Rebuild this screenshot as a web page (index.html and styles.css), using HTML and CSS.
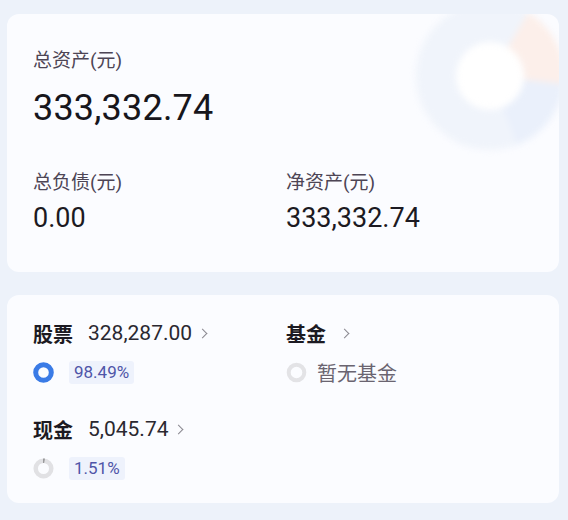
FILE: index.html
```html
<!DOCTYPE html>
<html lang="zh">
<head>
<meta charset="utf-8">
<link rel="stylesheet" href="styles.css">
</head>
<body>
<div class="page">
  <section class="card summary">
    <svg class="decor" width="200" height="200" viewBox="0 0 200 200">
      <circle cx="100" cy="100" r="54" fill="none" stroke="#f0f4fb" stroke-width="40"/>
      <path d="M128 54 A54 54 0 0 1 154 106" fill="none" stroke="#fcefea" stroke-width="40"/>
      <path d="M154 106 A54 54 0 0 1 120 150" fill="none" stroke="#eaf0fb" stroke-width="40"/>
      <circle cx="100" cy="100" r="33" fill="#ffffff"/>
    </svg>
    <div class="block">
      <div class="label">总资产(元)</div>
      <div class="big">333,332.74</div>
    </div>
    <div class="pair">
      <div class="block">
        <div class="label">总负债(元)</div>
        <div class="mid">0.00</div>
      </div>
      <div class="block">
        <div class="label">净资产(元)</div>
        <div class="mid">333,332.74</div>
      </div>
    </div>
  </section>
  <section class="card holdings">
    <div class="item">
      <div class="head"><span class="name">股票</span><span class="amount">328,287.00</span><span class="chev"></span></div>
      <div class="meta">
        <svg class="ring" width="21" height="21" viewBox="0 0 21 21"><circle cx="10.5" cy="10.5" r="7.8" fill="none" stroke="#3a7be6" stroke-width="5"/></svg>
        <span class="pill">98.49%</span>
      </div>
    </div>
    <div class="item">
      <div class="head"><span class="name">基金</span><span class="chev gap"></span></div>
      <div class="meta">
        <svg class="ring" width="21" height="21" viewBox="0 0 21 21"><circle cx="10.5" cy="10.5" r="7.8" fill="none" stroke="#e3e3e6" stroke-width="4"/></svg>
        <span class="empty">暂无基金</span>
      </div>
    </div>
    <div class="item">
      <div class="head"><span class="name">现金</span><span class="amount">5,045.74</span><span class="chev"></span></div>
      <div class="meta">
        <svg class="ring" width="21" height="21" viewBox="0 0 21 21"><circle cx="10.5" cy="10.5" r="7.8" fill="none" stroke="#e1e1e4" stroke-width="4.5"/><path d="M10.5 2.7 A7.8 7.8 0 0 1 11.3 2.74" fill="none" stroke="#555" stroke-width="4.5"/></svg>
        <span class="pill">1.51%</span>
      </div>
    </div>
  </section>
</div>
</body>
</html>
```
FILE: styles.css
```css
html, body {
  margin: 0;
  padding: 0;
  background: #edf2fa;
  font-family: Roboto, "Noto Sans CJK SC", sans-serif;
}
.page {
  width: 552px;
  padding: 14px 0 0 7px;
  display: flex;
  flex-direction: column;
  gap: 23px;
}
.card {
  background: #fbfcff;
  border-radius: 12px;
  position: relative;
  overflow: hidden;
  box-sizing: border-box;
}
.summary {
  height: 258px;
  padding: 34px 26px 0;
}
.decor {
  position: absolute;
  left: 383px;
  top: -38px;
  filter: blur(3px);
}
.block { position: relative; }
.label {
  font-size: 19px;
  line-height: 26px;
  color: #4d4555;
}
.big {
  font-size: 36px;
  line-height: 44px;
  color: #17161c;
  margin-top: 12px;
  letter-spacing: 0.2px;
}
.pair {
  display: grid;
  grid-template-columns: 253px 1fr;
  margin-top: 40px;
}
.mid {
  font-size: 27px;
  line-height: 32px;
  color: #1c1a22;
  margin-top: 6px;
}
.holdings {
  height: 208px;
  padding: 25px 26px 0;
  display: grid;
  grid-template-columns: 253px 1fr;
  row-gap: 31px;
  align-content: start;
}
.head {
  display: flex;
  align-items: center;
  height: 26px;
}
.name {
  font-size: 20px;
  font-weight: 700;
  color: #1c1a22;
}
.amount {
  font-size: 21px;
  color: #2a2830;
  margin-left: 15px;
}
.chev {
  width: 6px;
  height: 6px;
  border-top: 1.3px solid #8a8890;
  border-right: 1.3px solid #8a8890;
  transform: rotate(45deg);
  margin-left: 7px;
}
.chev.gap { margin-left: 15px; }
.meta {
  display: flex;
  align-items: center;
  height: 26px;
  margin-top: 13px;
}
.ring { flex: none; }
.pill {
  margin-left: 15px;
  background: #eef2fc;
  color: #4f55a8;
  font-size: 17px;
  line-height: 23px;
  padding: 0 5px;
  border-radius: 3px;
}
.empty {
  margin-left: 10px;
  font-size: 20px;
  color: #6a6470;
}
```
